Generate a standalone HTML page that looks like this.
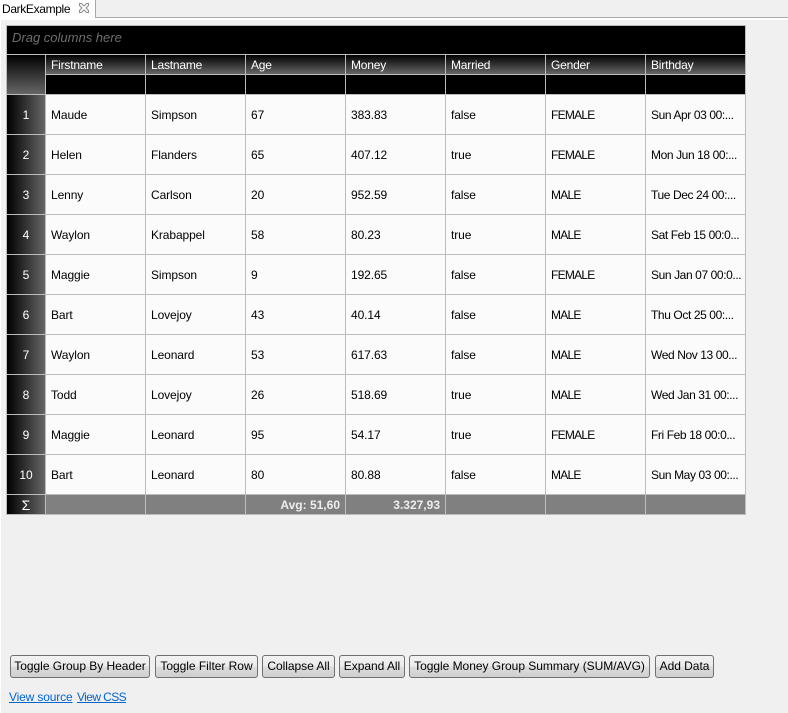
<!DOCTYPE html>
<html><head><meta charset="utf-8">
<style>
html,body{margin:0;padding:0}
body{width:788px;height:713px;position:relative;overflow:hidden;background:#f0f0f0;font:12px "Liberation Sans",sans-serif;color:#000}
div,a,span{position:absolute;white-space:nowrap}
.c{height:39px;line-height:41px;background:#fbfbfb;border-right:1px solid #bcbcbc;border-bottom:1px solid #bcbcbc;width:94px;padding-left:5px;overflow:hidden;letter-spacing:-.1px}
.g{letter-spacing:-.75px}
.d{letter-spacing:-.4px}
.n{left:7px;width:38px;height:39px;line-height:41px;text-align:center;color:#fff;background:linear-gradient(to right,#000 0%,#666 100%);border-bottom:1px solid #bcbcbc}
.h{top:55px;height:19px;line-height:20px;width:94px;padding-left:5px;color:#fff;background:linear-gradient(to bottom,#000,#666);border-right:1px solid #bcbcbc;letter-spacing:-.2px}
.f{top:75px;height:19px;width:99px;background:#000;border-right:1px solid #bcbcbc}
.s{top:495px;height:19px;width:94px;padding-right:5px;line-height:21px;background:#808080;border-right:1px solid #bcbcbc;color:#eee;font-weight:bold;text-align:right}
.b{top:655px;height:21px;line-height:21px;text-align:center;border:1px solid #707070;border-radius:3px;background:linear-gradient(to bottom,#f2f2f2,#ebebeb 50%,#ddd 50%,#cfcfcf);box-sizing:content-box;letter-spacing:-.03px}
a{color:#0066cc;text-decoration:underline;top:690px}
</style></head><body>
<div style="left:0;top:0;width:788px;height:17px;background:#f0f0f0;border-bottom:1px solid #a9a9a9"></div>
<div style="left:0;top:18px;width:788px;height:2px;background:#fff"></div>
<div style="left:0;top:18px;width:1px;height:695px;background:#fff"></div>
<div style="left:0;top:0;width:95px;height:20px;background:#fff;border-right:0"></div>
<div style="left:95px;top:0;width:1px;height:18px;background:#a9a9a9"></div>
<div style="left:2px;top:1px;height:16px;line-height:16px;letter-spacing:-.35px">DarkExample</div>
<svg style="position:absolute;left:78px;top:2px" width="12" height="12" viewBox="0 0 12 12"><path d="M1.5 1.5h2l2.500 2.500 2.500-2.500h2v2L8 6l2.500 2.500v2h-2L6 8l-2.500 2.500h-2v-2L4 6 1.500 3.500z" fill="#fff" stroke="#8a8a8a"/></svg>

<div style="left:6px;top:25px;width:740px;height:490px;background:#bcbcbc"></div>
<div style="left:7px;top:26px;width:738px;height:28px;background:#000;line-height:24px;color:#6e6e6e;font-size:13px;font-style:italic;text-indent:5px">Drag columns here</div>
<div style="left:7px;top:55px;width:38px;height:39px;background:linear-gradient(to bottom,#000,#666)"></div>
<div class="h" style="left:46px">Firstname</div><div class="h" style="left:146px">Lastname</div><div class="h" style="left:246px">Age</div><div class="h" style="left:346px">Money</div><div class="h" style="left:446px">Married</div><div class="h" style="left:546px">Gender</div><div class="h" style="left:646px;width:94px;border:0">Birthday</div>
<div class="f" style="left:46px"></div><div class="f" style="left:146px"></div><div class="f" style="left:246px"></div><div class="f" style="left:346px"></div><div class="f" style="left:446px"></div><div class="f" style="left:546px"></div><div class="f" style="left:646px;border:0"></div>

<div class="n" style="top:95px">1</div><div class="c" style="left:46px;top:95px">Maude</div><div class="c" style="left:146px;top:95px">Simpson</div><div class="c" style="left:246px;top:95px">67</div><div class="c" style="left:346px;top:95px">383.83</div><div class="c" style="left:446px;top:95px">false</div><div class="c g" style="left:546px;top:95px">FEMALE</div><div class="c d" style="left:646px;top:95px">Sun Apr 03 00:...</div>
<div class="n" style="top:135px">2</div><div class="c" style="left:46px;top:135px">Helen</div><div class="c" style="left:146px;top:135px">Flanders</div><div class="c" style="left:246px;top:135px">65</div><div class="c" style="left:346px;top:135px">407.12</div><div class="c" style="left:446px;top:135px">true</div><div class="c g" style="left:546px;top:135px">FEMALE</div><div class="c d" style="left:646px;top:135px">Mon Jun 18 00:...</div>
<div class="n" style="top:175px">3</div><div class="c" style="left:46px;top:175px">Lenny</div><div class="c" style="left:146px;top:175px">Carlson</div><div class="c" style="left:246px;top:175px">20</div><div class="c" style="left:346px;top:175px">952.59</div><div class="c" style="left:446px;top:175px">false</div><div class="c g" style="left:546px;top:175px">MALE</div><div class="c d" style="left:646px;top:175px">Tue Dec 24 00:...</div>
<div class="n" style="top:215px">4</div><div class="c" style="left:46px;top:215px">Waylon</div><div class="c" style="left:146px;top:215px">Krabappel</div><div class="c" style="left:246px;top:215px">58</div><div class="c" style="left:346px;top:215px">80.23</div><div class="c" style="left:446px;top:215px">true</div><div class="c g" style="left:546px;top:215px">MALE</div><div class="c d" style="left:646px;top:215px">Sat Feb 15 00:0...</div>
<div class="n" style="top:255px">5</div><div class="c" style="left:46px;top:255px">Maggie</div><div class="c" style="left:146px;top:255px">Simpson</div><div class="c" style="left:246px;top:255px">9</div><div class="c" style="left:346px;top:255px">192.65</div><div class="c" style="left:446px;top:255px">false</div><div class="c g" style="left:546px;top:255px">FEMALE</div><div class="c d" style="left:646px;top:255px">Sun Jan 07 00:0...</div>
<div class="n" style="top:295px">6</div><div class="c" style="left:46px;top:295px">Bart</div><div class="c" style="left:146px;top:295px">Lovejoy</div><div class="c" style="left:246px;top:295px">43</div><div class="c" style="left:346px;top:295px">40.14</div><div class="c" style="left:446px;top:295px">false</div><div class="c g" style="left:546px;top:295px">MALE</div><div class="c d" style="left:646px;top:295px">Thu Oct 25 00:...</div>
<div class="n" style="top:335px">7</div><div class="c" style="left:46px;top:335px">Waylon</div><div class="c" style="left:146px;top:335px">Leonard</div><div class="c" style="left:246px;top:335px">53</div><div class="c" style="left:346px;top:335px">617.63</div><div class="c" style="left:446px;top:335px">false</div><div class="c g" style="left:546px;top:335px">MALE</div><div class="c d" style="left:646px;top:335px">Wed Nov 13 00...</div>
<div class="n" style="top:375px">8</div><div class="c" style="left:46px;top:375px">Todd</div><div class="c" style="left:146px;top:375px">Lovejoy</div><div class="c" style="left:246px;top:375px">26</div><div class="c" style="left:346px;top:375px">518.69</div><div class="c" style="left:446px;top:375px">true</div><div class="c g" style="left:546px;top:375px">MALE</div><div class="c d" style="left:646px;top:375px">Wed Jan 31 00:...</div>
<div class="n" style="top:415px">9</div><div class="c" style="left:46px;top:415px">Maggie</div><div class="c" style="left:146px;top:415px">Leonard</div><div class="c" style="left:246px;top:415px">95</div><div class="c" style="left:346px;top:415px">54.17</div><div class="c" style="left:446px;top:415px">true</div><div class="c g" style="left:546px;top:415px">FEMALE</div><div class="c d" style="left:646px;top:415px">Fri Feb 18 00:0...</div>
<div class="n" style="top:455px">10</div><div class="c" style="left:46px;top:455px">Bart</div><div class="c" style="left:146px;top:455px">Leonard</div><div class="c" style="left:246px;top:455px">80</div><div class="c" style="left:346px;top:455px">80.88</div><div class="c" style="left:446px;top:455px">false</div><div class="c g" style="left:546px;top:455px">MALE</div><div class="c d" style="left:646px;top:455px">Sun May 03 00:...</div>

<div class="n" style="top:495px;height:19px;line-height:20px;font-size:14px;border:0">Σ</div>
<div class="s" style="left:46px"></div><div class="s" style="left:146px"></div><div class="s" style="left:246px">Avg: 51,60</div><div class="s" style="left:346px">3.327,93</div><div class="s" style="left:446px"></div><div class="s" style="left:546px"></div><div class="s" style="left:646px;width:99px;padding:0;border:0"></div>

<div class="b" style="left:10px;width:138px">Toggle Group By Header</div>
<div class="b" style="left:155px;width:101px">Toggle Filter Row</div>
<div class="b" style="left:262px;width:71px">Collapse All</div>
<div class="b" style="left:339px;width:64px">Expand All</div>
<div class="b" style="left:409px;width:239px">Toggle Money Group Summary (SUM/AVG)</div>
<div class="b" style="left:655px;width:57px">Add Data</div>
<a href="#" style="left:9px;letter-spacing:-.15px">View source</a>
<a href="#" style="left:77px;letter-spacing:-.6px">View CSS</a>
</body></html>
